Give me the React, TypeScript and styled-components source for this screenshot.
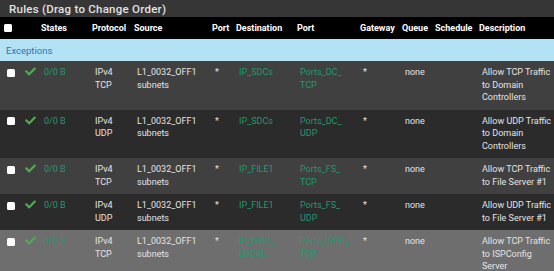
import React from 'react';
import styled, { createGlobalStyle } from 'styled-components';
import { FaCheck } from 'react-icons/fa';

const GlobalStyle = createGlobalStyle`
  html, body {
    margin: 0;
    padding: 0;
    background: #2b2b2b;
  }
  body {
    font-family: Roboto, 'Liberation Sans', sans-serif;
    width: 554px;
    height: 271px;
    overflow: hidden;
  }
`;

const Panel = styled.div`
  width: 554px;
  display: flex;
  flex-direction: column;
`;

const PanelHeading = styled.div`
  height: 17px;
  display: flex;
  align-items: center;
  padding-left: 9px;
  background: #363636;
  color: #e2e2e2;
  font-size: 11.5px;
  font-weight: 500;
  letter-spacing: 0.25px;
`;

const Table = styled.table`
  width: 554px;
  table-layout: fixed;
  border-collapse: collapse;
  border-spacing: 0;
  font-size: 9px;
`;

const HeadRow = styled.tr`
  height: 22px;
  background: #000;
  color: #fff;
`;

const HeadCell = styled.th`
  padding: 0 0 0 3px;
  text-align: left;
  font-weight: 700;
  white-space: nowrap;
  vertical-align: middle;
`;

const SectionRow = styled.tr`
  height: 22px;
  background: #b3e2f5;
`;

const SectionCell = styled.td`
  padding: 0 0 0 6px;
  color: #2f72b4;
  font-size: 9.5px;
  vertical-align: middle;
`;

type Tone = 'mid' | 'dark' | 'light';

const toneBg: Record<Tone, string> = {
  mid: '#404040',
  dark: '#2b2b2b',
  light: '#6e6e6e',
};

const Row = styled.tr<{ $tone: Tone }>`
  background: ${({ $tone }) => toneBg[$tone]};
  color: #e4e4e4;
`;

const Cell = styled.td<{ $link?: boolean }>`
  padding: 5px 0 6px 6px;
  vertical-align: top;
  line-height: 12.5px;
  white-space: pre-line;
  color: ${({ $link }) => ($link ? '#1e9a6f' : 'inherit')};
`;

const MarkCell = styled.td`
  padding: 7px 0 0 7px;
  vertical-align: top;
`;

const Marks = styled.div`
  display: flex;
  align-items: center;
  gap: 10px;
`;

const Box = styled.input.attrs({ type: 'checkbox' })<{ $head?: boolean }>`
  appearance: none;
  margin: 0;
  width: 8px;
  height: 8px;
  border-radius: 1.5px;
  background: #fff;
  border: none;
  display: block;
`;

const HeadMark = styled.div`
  padding-left: 1px;
`;

const Check = styled(FaCheck)`
  color: #4cae4c;
  width: 11px;
  height: 11px;
  margin-top: -2px;
`;

const widths = [38, 51, 42, 78, 24, 61, 63, 42, 33, 44, 78];

const headers = [
  '',
  'States',
  'Protocol',
  'Source',
  'Port',
  'Destination',
  'Port',
  'Gateway',
  'Queue',
  'Schedule',
  'Description',
];

interface Rule {
  tone: Tone;
  proto: string;
  dest: string;
  port: string;
  descr: string;
}

const rules: Rule[] = [
  {
    tone: 'mid',
    proto: 'TCP',
    dest: 'IP_SDCs',
    port: 'Ports_DC_\nTCP',
    descr: 'Allow TCP Traffic\nto Domain\nControllers',
  },
  {
    tone: 'dark',
    proto: 'UDP',
    dest: 'IP_SDCs',
    port: 'Ports_DC_\nUDP',
    descr: 'Allow UDP Traffic\nto Domain\nControllers',
  },
  {
    tone: 'mid',
    proto: 'TCP',
    dest: 'IP_FILE1',
    port: 'Ports_FS_\nTCP',
    descr: 'Allow TCP Traffic\nto File Server #1',
  },
  {
    tone: 'dark',
    proto: 'UDP',
    dest: 'IP_FILE1',
    port: 'Ports_FS_\nUDP',
    descr: 'Allow UDP Traffic\nto File Server #1',
  },
  {
    tone: 'light',
    proto: 'TCP',
    dest: 'IP_ISPC_\nLOCAL',
    port: 'Ports_ISPC_\nTCP',
    descr: 'Allow TCP Traffic\nto ISPConfig\nServer',
  },
];

const App: React.FC = () => {
  return (
    <>
      <GlobalStyle />
      <Panel>
        <PanelHeading>Rules (Drag to Change Order)</PanelHeading>
        <Table>
          <colgroup>
            {widths.map((w, i) => (
              <col key={i} style={{ width: w }} />
            ))}
          </colgroup>
          <thead>
            <HeadRow>
              {headers.map((h, i) => (
                <HeadCell key={i}>
                  {i === 0 ? (
                    <HeadMark>
                      <Box readOnly />
                    </HeadMark>
                  ) : (
                    h
                  )}
                </HeadCell>
              ))}
            </HeadRow>
          </thead>
          <tbody>
            <SectionRow>
              <SectionCell colSpan={11}>Exceptions</SectionCell>
            </SectionRow>
            {rules.map((r, i) => (
              <Row key={i} $tone={r.tone}>
                <MarkCell>
                  <Marks>
                    <Box readOnly />
                    <Check />
                  </Marks>
                </MarkCell>
                <Cell $link>0/0 B</Cell>
                <Cell>{'IPv4\n' + r.proto}</Cell>
                <Cell>{'L1_0032_OFF1\nsubnets'}</Cell>
                <Cell>*</Cell>
                <Cell $link>{r.dest}</Cell>
                <Cell $link>{r.port}</Cell>
                <Cell>*</Cell>
                <Cell>none</Cell>
                <Cell />
                <Cell>{r.descr}</Cell>
              </Row>
            ))}
          </tbody>
        </Table>
      </Panel>
    </>
  );
};

export default App;
